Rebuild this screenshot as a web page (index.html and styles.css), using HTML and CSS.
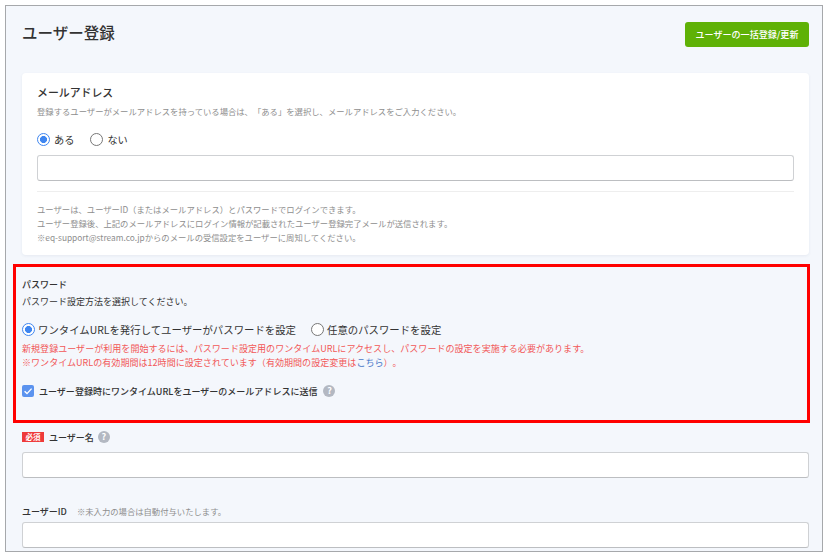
FILE: index.html
```html
<!DOCTYPE html>
<html lang="ja">
<head>
<meta charset="utf-8">
<title>ユーザー登録</title>
<link rel="stylesheet" href="styles.css">
</head>
<body>
<main class="frame">
  <header class="head">
    <h1 class="title">ユーザー登録</h1>
    <button class="bulk" type="button">ユーザーの一括登録/更新</button>
  </header>

  <section class="card">
    <h2 class="card-title">メールアドレス</h2>
    <p class="hint">登録するユーザーがメールアドレスを持っている場合は、「ある」を選択し、メールアドレスをご入力ください。</p>
    <div class="radios small">
      <span class="radio"><span class="dot on"></span>ある</span>
      <span class="radio"><span class="dot"></span>ない</span>
    </div>
    <div class="input"></div>
    <hr class="rule">
    <p class="notes">ユーザーは、ユーザーID（またはメールアドレス）とパスワードでログインできます。<br>ユーザー登録後、上記のメールアドレスにログイン情報が記載されたユーザー登録完了メールが送信されます。<br>※eq-support@stream.co.jpからのメールの受信設定をユーザーに周知してください。</p>
  </section>

  <section class="pw">
    <h2 class="pw-title">パスワード</h2>
    <p class="pw-sub">パスワード設定方法を選択してください。</p>
    <div class="radios large">
      <span class="radio"><span class="dot on"></span>ワンタイムURLを発行してユーザーがパスワードを設定</span>
      <span class="radio"><span class="dot"></span>任意のパスワードを設定</span>
    </div>
    <p class="warn">新規登録ユーザーが利用を開始するには、パスワード設定用のワンタイムURLにアクセスし、パスワードの設定を実施する必要があります。<br>※ワンタイムURLの有効期間は12時間に設定されています（有効期間の設定変更は<a class="link" href="#">こちら</a>）。</p>
    <div class="check-row">
      <span class="check"><svg viewBox="0 0 12 12" width="12" height="12"><path d="M2.6 6.2 5 8.6 9.6 3.6" fill="none" stroke="#fff" stroke-width="1.4"/></svg></span>
      <span class="check-label">ユーザー登録時にワンタイムURLをユーザーのメールアドレスに送信</span>
      <span class="help">?</span>
    </div>
  </section>

  <div class="field name-field">
    <div class="label-row">
      <span class="req">必須</span>
      <span class="label">ユーザー名</span>
      <span class="help">?</span>
    </div>
    <div class="input"></div>
  </div>

  <div class="field id-field">
    <div class="label-row">
      <span class="label">ユーザーID</span>
      <span class="note">※未入力の場合は自動付与いたします。</span>
    </div>
    <div class="input"></div>
  </div>
</main>
</body>
</html>
```

FILE: styles.css
```css
* { box-sizing: border-box; }
html, body { margin: 0; padding: 0; background: #fff; }
body {
  width: 827px;
  height: 553px;
  overflow: hidden;
  font-family: "Noto Sans CJK JP", "Noto Sans", sans-serif;
  color: #333;
  text-spacing-trim: space-all;
}
h1, h2, p { margin: 0; font-weight: normal; }

.frame {
  margin: 5px 0 0 5px;
  width: 818px;
  height: 547px;
  padding: 0 13px 0 16px;
  background: #f4f7fc;
  border: 1px solid #a6a8ab;
  overflow: hidden;
}
.head {
  display: flex;
  justify-content: space-between;
  align-items: flex-start;
  padding-top: 16px;
  height: 67px;
}
.title { font-size: 15.5px; line-height: 21px; font-weight: 500; color: #333; }
.bulk {
  width: 124px;
  height: 25px;
  padding: 0;
  border: 0;
  border-radius: 3px;
  background: #5fb106;
  color: #fff;
  font: 500 9.05px/25px "Noto Sans CJK JP", sans-serif;
}

.card {
  background: #fff;
  border-radius: 4px;
  box-shadow: 0 1px 3px rgba(60, 80, 120, .08);
  height: 182px;
  padding: 11px 15px 0;
}
.card-title { font-size: 10.9px; line-height: 16px; font-weight: 500; }
.hint { margin-top: 4px; font-size: 8.33px; line-height: 14px; color: #8e8e8e; white-space: nowrap; }
.radios { display: flex; align-items: center; }
.radio { display: flex; align-items: center; }
.dot {
  width: 13px;
  height: 13px;
  border-radius: 50%;
  border: 1.5px solid #777;
  background: #fff;
  flex: none;
}
.dot.on {
  border-color: #3f86f0;
  background: radial-gradient(circle, #3f86f0 0 3.2px, #fff 3.8px);
}
.radios.small { margin-top: 11px; height: 20px; font-size: 10.2px; gap: 16px; }
.radios.small .dot { margin-right: 4px; }
.input {
  height: 26px;
  background: #fff;
  border: 1px solid #cfd1d4;
  border-bottom-color: #bcbec1;
  border-radius: 3px;
}
.card .input { margin-top: 6px; }
.rule { margin: 10px 0 0; border: 0; border-top: 1px solid #eeeeee; }
.notes { margin-top: 10px; font-size: 8.33px; line-height: 14px; color: #8e8e8e; white-space: nowrap; }

.pw {
  margin: 9px -1px 0 -9px;
  height: 159px;
  border: 3px solid #ff0000;
  padding: 11px 6px 0;
}
.pw-title { font-size: 9px; line-height: 14px; font-weight: 500; }
.pw-sub { margin-top: 3px; font-size: 9px; line-height: 14px; }
.radios.large { margin-top: 10px; height: 20px; font-size: 10.4px; gap: 15px; }
.radios.large .dot { margin-right: 3px; }
.warn { margin-top: 3px; font-size: 9.06px; line-height: 13.5px; color: #f25858; white-space: nowrap; }
.link { color: #4a78c8; text-decoration: none; }
.check-row { display: flex; align-items: center; margin-top: 13px; height: 18px; }
.check {
  width: 12px;
  height: 12px;
  border-radius: 2px;
  background: #5b93ef;
  display: flex;
  flex: none;
  margin-right: 5px;
}
.check-label { font-size: 9.03px; font-weight: 500; white-space: nowrap; }
.help {
  width: 12px;
  height: 12px;
  margin-left: 6px;
  border-radius: 50%;
  background: #b3b8c2;
  color: #fff;
  font-size: 9px;
  line-height: 12px;
  font-weight: 700;
  text-align: center;
  flex: none;
}

.label-row { display: flex; align-items: center; height: 16px; }
.name-field { margin-top: 6px; }
.id-field { margin-top: 25px; }
.name-field .input { margin-top: 7px; }
.id-field .input { margin-top: 3px; }
.req {
  width: 22px;
  height: 10px;
  background: #ee3a3a;
  color: #fff;
  font-size: 7.5px;
  font-weight: 700;
  line-height: 10px;
  text-align: center;
  margin-right: 5px;
}
.label { font-size: 9px; font-weight: 500; }
.label-row .help { margin-left: 4px; }
.note { font-size: 8.33px; color: #8e8e8e; margin-left: 10px; }
```
